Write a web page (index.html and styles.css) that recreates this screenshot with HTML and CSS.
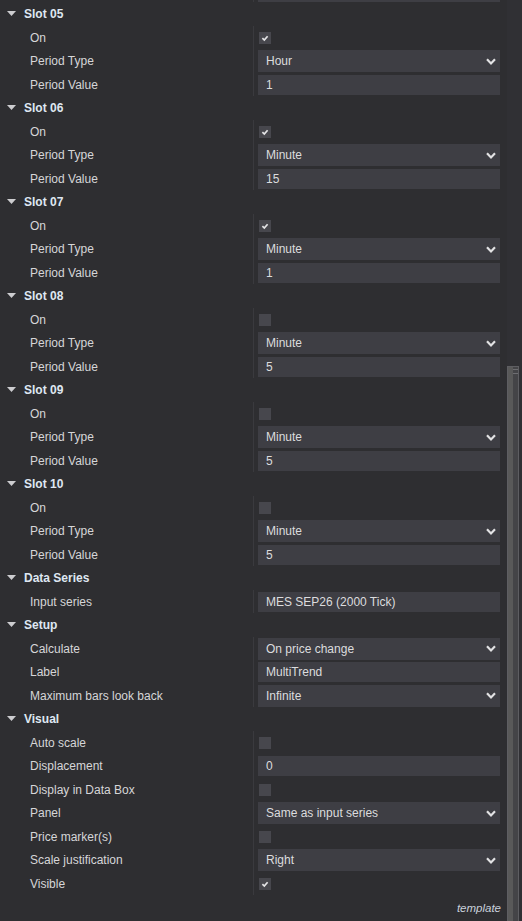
FILE: index.html
```html
<!DOCTYPE html>
<html lang="en">
<head>
    <meta charset="UTF-8">
    <meta name="viewport" content="width=device-width, initial-scale=1.0">
    <title>Indicator Properties</title>
    <link rel="stylesheet" href="styles.css">
</head>
<body>

    <div class="window">
        <div class="panel">
            <div class="list">

                <!-- tail of Slot 04, scrolled out of view except the field's bottom edge -->
                <section class="group group-cut">
                    <div class="rows">
                        <div class="row"><span class="label"></span><span class="value"><span class="field"></span></span></div>
                    </div>
                </section>

                <!-- Slot 05 -->
                <section class="group">
                    <div class="group-head"><svg class="caret" width="9" height="5" viewBox="0 0 9 5"><polygon points="0,0 9,0 4.5,5"/></svg>Slot 05</div>
                    <div class="rows">
                        <div class="row"><span class="label">On</span><span class="value"><span class="check"><svg width="12" height="12" viewBox="0 0 12 12"><path d="M3.4 6.2 L5.3 8 L8.6 4.2"/></svg></span></span></div>
                        <div class="row"><span class="label">Period Type</span><span class="value"><span class="field select">Hour<svg class="chev" width="10" height="7" viewBox="0 0 10 7"><path d="M1 1.2 L5 5.4 L9 1.2"/></svg></span></span></div>
                        <div class="row"><span class="label">Period Value</span><span class="value"><span class="field">1</span></span></div>
                    </div>
                </section>

                <!-- Slot 06 -->
                <section class="group">
                    <div class="group-head"><svg class="caret" width="9" height="5" viewBox="0 0 9 5"><polygon points="0,0 9,0 4.5,5"/></svg>Slot 06</div>
                    <div class="rows">
                        <div class="row"><span class="label">On</span><span class="value"><span class="check"><svg width="12" height="12" viewBox="0 0 12 12"><path d="M3.4 6.2 L5.3 8 L8.6 4.2"/></svg></span></span></div>
                        <div class="row"><span class="label">Period Type</span><span class="value"><span class="field select">Minute<svg class="chev" width="10" height="7" viewBox="0 0 10 7"><path d="M1 1.2 L5 5.4 L9 1.2"/></svg></span></span></div>
                        <div class="row"><span class="label">Period Value</span><span class="value"><span class="field">15</span></span></div>
                    </div>
                </section>

                <!-- Slot 07 -->
                <section class="group">
                    <div class="group-head"><svg class="caret" width="9" height="5" viewBox="0 0 9 5"><polygon points="0,0 9,0 4.5,5"/></svg>Slot 07</div>
                    <div class="rows">
                        <div class="row"><span class="label">On</span><span class="value"><span class="check"><svg width="12" height="12" viewBox="0 0 12 12"><path d="M3.4 6.2 L5.3 8 L8.6 4.2"/></svg></span></span></div>
                        <div class="row"><span class="label">Period Type</span><span class="value"><span class="field select">Minute<svg class="chev" width="10" height="7" viewBox="0 0 10 7"><path d="M1 1.2 L5 5.4 L9 1.2"/></svg></span></span></div>
                        <div class="row"><span class="label">Period Value</span><span class="value"><span class="field">1</span></span></div>
                    </div>
                </section>

                <!-- Slot 08 -->
                <section class="group">
                    <div class="group-head"><svg class="caret" width="9" height="5" viewBox="0 0 9 5"><polygon points="0,0 9,0 4.5,5"/></svg>Slot 08</div>
                    <div class="rows">
                        <div class="row"><span class="label">On</span><span class="value"><span class="check"></span></span></div>
                        <div class="row"><span class="label">Period Type</span><span class="value"><span class="field select">Minute<svg class="chev" width="10" height="7" viewBox="0 0 10 7"><path d="M1 1.2 L5 5.4 L9 1.2"/></svg></span></span></div>
                        <div class="row"><span class="label">Period Value</span><span class="value"><span class="field">5</span></span></div>
                    </div>
                </section>

                <!-- Slot 09 -->
                <section class="group">
                    <div class="group-head"><svg class="caret" width="9" height="5" viewBox="0 0 9 5"><polygon points="0,0 9,0 4.5,5"/></svg>Slot 09</div>
                    <div class="rows">
                        <div class="row"><span class="label">On</span><span class="value"><span class="check"></span></span></div>
                        <div class="row"><span class="label">Period Type</span><span class="value"><span class="field select">Minute<svg class="chev" width="10" height="7" viewBox="0 0 10 7"><path d="M1 1.2 L5 5.4 L9 1.2"/></svg></span></span></div>
                        <div class="row"><span class="label">Period Value</span><span class="value"><span class="field">5</span></span></div>
                    </div>
                </section>

                <!-- Slot 10 -->
                <section class="group">
                    <div class="group-head"><svg class="caret" width="9" height="5" viewBox="0 0 9 5"><polygon points="0,0 9,0 4.5,5"/></svg>Slot 10</div>
                    <div class="rows">
                        <div class="row"><span class="label">On</span><span class="value"><span class="check"></span></span></div>
                        <div class="row"><span class="label">Period Type</span><span class="value"><span class="field select">Minute<svg class="chev" width="10" height="7" viewBox="0 0 10 7"><path d="M1 1.2 L5 5.4 L9 1.2"/></svg></span></span></div>
                        <div class="row"><span class="label">Period Value</span><span class="value"><span class="field">5</span></span></div>
                    </div>
                </section>

                <!-- Data Series -->
                <section class="group">
                    <div class="group-head"><svg class="caret" width="9" height="5" viewBox="0 0 9 5"><polygon points="0,0 9,0 4.5,5"/></svg>Data Series</div>
                    <div class="rows">
                        <div class="row"><span class="label">Input series</span><span class="value"><span class="field">MES SEP26 (2000 Tick)</span></span></div>
                    </div>
                </section>

                <!-- Setup -->
                <section class="group">
                    <div class="group-head"><svg class="caret" width="9" height="5" viewBox="0 0 9 5"><polygon points="0,0 9,0 4.5,5"/></svg>Setup</div>
                    <div class="rows">
                        <div class="row"><span class="label">Calculate</span><span class="value"><span class="field select">On price change<svg class="chev" width="10" height="7" viewBox="0 0 10 7"><path d="M1 1.2 L5 5.4 L9 1.2"/></svg></span></span></div>
                        <div class="row"><span class="label">Label</span><span class="value"><span class="field">MultiTrend</span></span></div>
                        <div class="row"><span class="label">Maximum bars look back</span><span class="value"><span class="field select">Infinite<svg class="chev" width="10" height="7" viewBox="0 0 10 7"><path d="M1 1.2 L5 5.4 L9 1.2"/></svg></span></span></div>
                    </div>
                </section>

                <!-- Visual -->
                <section class="group">
                    <div class="group-head"><svg class="caret" width="9" height="5" viewBox="0 0 9 5"><polygon points="0,0 9,0 4.5,5"/></svg>Visual</div>
                    <div class="rows">
                        <div class="row"><span class="label">Auto scale</span><span class="value"><span class="check"></span></span></div>
                        <div class="row"><span class="label">Displacement</span><span class="value"><span class="field">0</span></span></div>
                        <div class="row"><span class="label">Display in Data Box</span><span class="value"><span class="check"></span></span></div>
                        <div class="row"><span class="label">Panel</span><span class="value"><span class="field select">Same as input series<svg class="chev" width="10" height="7" viewBox="0 0 10 7"><path d="M1 1.2 L5 5.4 L9 1.2"/></svg></span></span></div>
                        <div class="row"><span class="label">Price marker(s)</span><span class="value"><span class="check"></span></span></div>
                        <div class="row"><span class="label">Scale justification</span><span class="value"><span class="field select">Right<svg class="chev" width="10" height="7" viewBox="0 0 10 7"><path d="M1 1.2 L5 5.4 L9 1.2"/></svg></span></span></div>
                        <div class="row"><span class="label">Visible</span><span class="value"><span class="check"><svg width="12" height="12" viewBox="0 0 12 12"><path d="M3.4 6.2 L5.3 8 L8.6 4.2"/></svg></span></span></div>
                    </div>
                </section>

            </div>

            <div class="footer">template</div>
        </div>

        <div class="scrollbar">
            <div class="thumb"><span class="grip"></span></div>
        </div>
    </div>

</body>
</html>
```

FILE: styles.css
```css
html, body {
    margin: 0;
    padding: 0;
    height: 100%;
}

body {
    background-color: #2e2e31;
    font-family: "Liberation Sans", Arial, sans-serif;
    color: #d4d4d6;
    overflow: hidden;
}

.window {
    display: flex;
    height: 921px;
}

.panel {
    width: 507px;
    display: flex;
    flex-direction: column;
    overflow: hidden;
}

.list {
    margin-top: -21.25px;
}

.group-head {
    display: flex;
    align-items: center;
    height: 23.5px;
    padding-left: 7px;
    padding-bottom: 1px;
    box-sizing: border-box;
    font-size: 12px;
    font-weight: bold;
    color: #dfe7f2;
}

.caret {
    margin-right: 8px;
    fill: #cdcdd0;
}

.rows {
    display: flex;
    flex-direction: column;
}

.row {
    display: flex;
    height: 23.5px;
}

.label {
    width: 223px;
    padding-left: 30px;
    display: flex;
    align-items: center;
    font-size: 12px;
    color: #d6d6d8;
}

.value {
    width: 242px;
    border-left: 1px solid #3a3a3e;
    padding-left: 4px;
    display: flex;
    align-items: center;
}

.group-cut .value {
    align-items: flex-end;
}

.field {
    flex: 1;
    height: 20px;
    background-color: #3e3e44;
    display: flex;
    align-items: center;
    padding-left: 8px;
    font-size: 12px;
    color: #dcdcde;
}

.field.select {
    height: 22px;
    justify-content: space-between;
    padding-right: 4px;
}

.chev path {
    fill: none;
    stroke: #e2e2e4;
    stroke-width: 2.2;
}

.check {
    width: 12px;
    height: 12px;
    margin-left: 1px;
    background-color: #47474d;
    display: flex;
}

.check path {
    fill: none;
    stroke: #e4e4e6;
    stroke-width: 1.7;
}

.footer {
    margin-top: auto;
    text-align: right;
    padding-right: 6px;
    padding-bottom: 7px;
    font-size: 11.5px;
    font-style: italic;
    color: #c9d1dc;
}

.scrollbar {
    width: 15px;
    background-color: #303034;
    display: flex;
    flex-direction: column;
    justify-content: flex-end;
}

.thumb {
    height: 555px;
    width: 12px;
    border: 1px solid #5e5e62;
    border-bottom: none;
    box-sizing: border-box;
    background: linear-gradient(to right, #595959 0, #595959 50%, #444447 50%, #444447 100%);
    padding-top: 2px;
}

.grip {
    display: block;
    margin-left: 5px;
    width: 5px;
    height: 3px;
    border-top: 1px solid #6e6e72;
    border-bottom: 1px solid #6e6e72;
}
```
